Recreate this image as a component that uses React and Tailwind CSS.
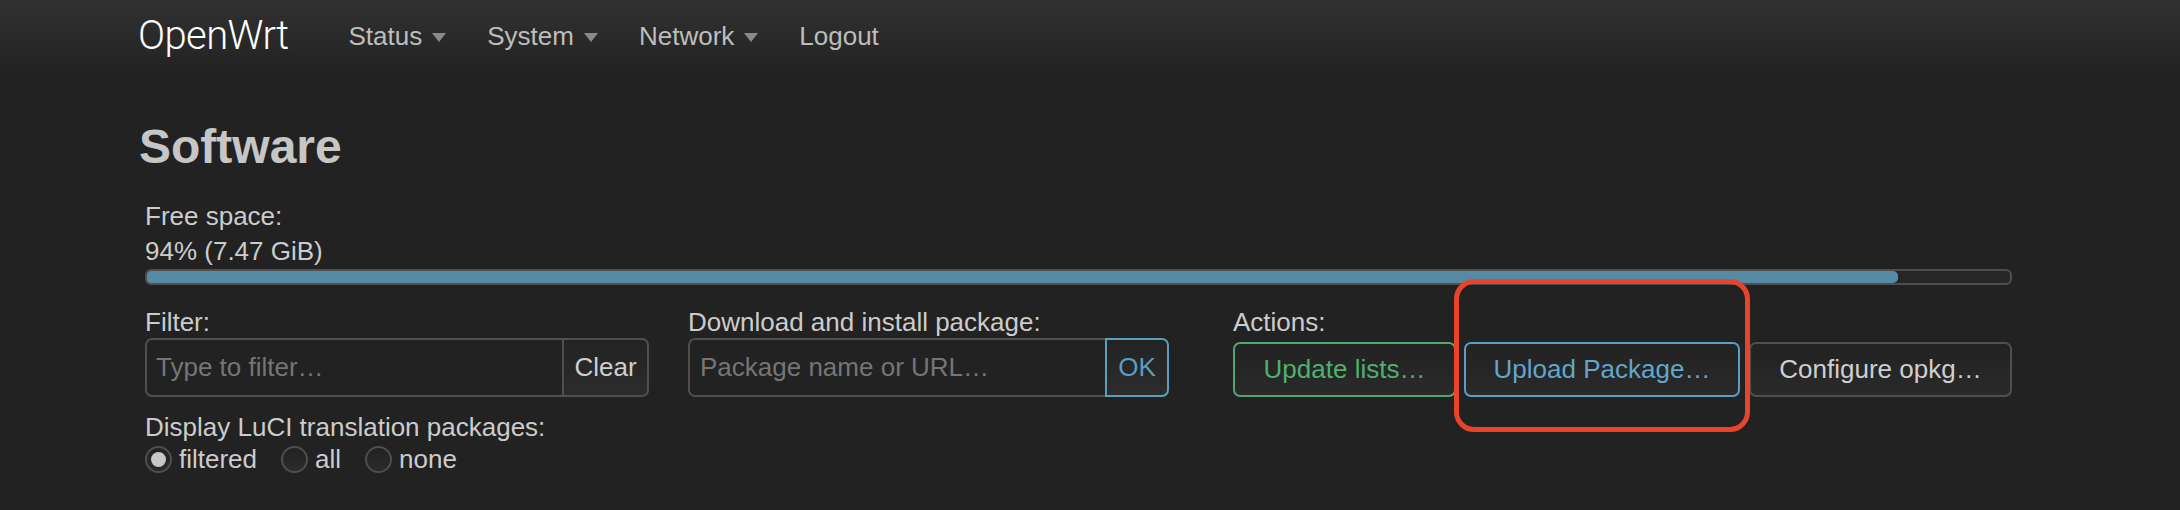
import React from 'react'

const navItems = [
  { label: 'Status', caret: true },
  { label: 'System', caret: true },
  { label: 'Network', caret: true },
  { label: 'Logout', caret: false },
]

function Caret() {
  return (
    <span className="ml-[10px] mt-[3px] inline-block w-0 h-0 border-l-[7px] border-r-[7px] border-t-[9px] border-l-transparent border-r-transparent border-t-[#8a8a8a]" />
  )
}

function Radio({ checked, label }) {
  return (
    <label className="flex items-center mr-[24px]">
      <span className="w-[27px] h-[27px] rounded-full border-2 border-[#4e4e4e] bg-gradient-to-b from-[#222] to-[#2b2b2b] flex items-center justify-center">
        {checked && <span className="w-[15px] h-[15px] rounded-full bg-[#c8c8c8]" />}
      </span>
      <span className="ml-[7px]">{label}</span>
    </label>
  )
}

export default function App() {
  return (
    <div className="min-h-screen bg-[#222] text-[#ccc] font-['Liberation_Sans',Arial,sans-serif] text-[26px]">
      {/* header */}
      <div className="h-[72px] bg-gradient-to-b from-[#313131] to-[#232323] flex items-center pl-[138px]">
        <div className="text-[40px] font-light text-white leading-none font-['Roboto',sans-serif] tracking-[-0.6px]">OpenWrt</div>
        <nav className="flex items-center ml-[60px] text-[#bdbdbd]">
          {navItems.map(item => (
            <div key={item.label} className="flex items-center mr-[41px]">
              <span>{item.label}</span>
              {item.caret && <Caret />}
            </div>
          ))}
        </nav>
      </div>

      <div className="pl-[139px]">
        <h2 className="mt-[47px] text-[48px] leading-[56px] font-bold text-[#c6c6c6]">Software</h2>

        <div className="pl-[6px] w-[1873px]">
          {/* free space */}
          <div className="mt-[24px] leading-[35px]">Free space:</div>
          <div className="leading-[35px]">94% (7.47 GiB)</div>
          <div className="h-[16px] rounded-[6px] border-2 border-[#4f4f4f] bg-[#262626] overflow-hidden">
            <div className="h-full w-[94%] bg-[#578ba5] rounded-r-[5px]" />
          </div>

          {/* controls */}
          <div className="flex mt-[22px]">
            <div className="w-[504px]">
              <div className="leading-[30px]">Filter:</div>
              <div className="flex mt-[1px] h-[59px]">
                <div className="flex-1 border-2 border-r-0 border-[#4f4f4f] rounded-l-[7px] flex items-center pl-[9px] text-[#757575]">
                  Type to filter…
                </div>
                <div className="w-[87px] border-2 border-[#4f4f4f] rounded-r-[7px] bg-gradient-to-b from-[#232323] to-[#2c2c2c] flex items-center justify-center text-[#cfcfcf]">
                  Clear
                </div>
              </div>
            </div>

            <div className="w-[481px] ml-[39px]">
              <div className="leading-[30px]">Download and install package:</div>
              <div className="flex mt-[1px] h-[59px]">
                <div className="flex-1 border-2 border-r-0 border-[#4f4f4f] rounded-l-[7px] flex items-center pl-[10px] text-[#757575]">
                  Package name or URL…
                </div>
                <div className="w-[64px] border-2 border-[#5a9ec2] rounded-r-[7px] bg-gradient-to-b from-[#232323] to-[#2c2c2c] flex items-center justify-center text-[#5a9ec2]">
                  OK
                </div>
              </div>
            </div>

            <div className="ml-[64px] flex-1">
              <div className="leading-[30px]">Actions:</div>
              <div className="relative flex mt-[5px] h-[55px]">
                <div className="w-[223px] border-2 border-[#4ea86f] rounded-[7px] bg-gradient-to-b from-[#222] to-[#2a2a2a] flex items-center justify-center text-[#4fb072]">
                  Update lists…
                </div>
                <div className="w-[276px] ml-[8px] border-2 border-[#5a9ec2] rounded-[7px] bg-gradient-to-b from-[#222] to-[#2a2a2a] flex items-center justify-center text-[#62a6cc]">
                  Upload Package…
                </div>
                <div className="flex-1 ml-[9px] border-2 border-[#4f4f4f] rounded-[7px] bg-gradient-to-b from-[#222] to-[#2a2a2a] flex items-center justify-center text-[#cfcfcf]">
                  Configure opkg…
                </div>
                {/* highlight annotation */}
                <div className="absolute left-[221px] top-[-63px] w-[296px] h-[153px] border-[5px] border-[#ea432b] rounded-[20px] pointer-events-none" />
              </div>
            </div>
          </div>

          {/* translation packages */}
          <div className="mt-[15px] leading-[30px]">Display LuCI translation packages:</div>
          <div className="flex items-center h-[34px]">
            <Radio checked label="filtered" />
            <Radio label="all" />
            <Radio label="none" />
          </div>
        </div>
      </div>
    </div>
  )
}
